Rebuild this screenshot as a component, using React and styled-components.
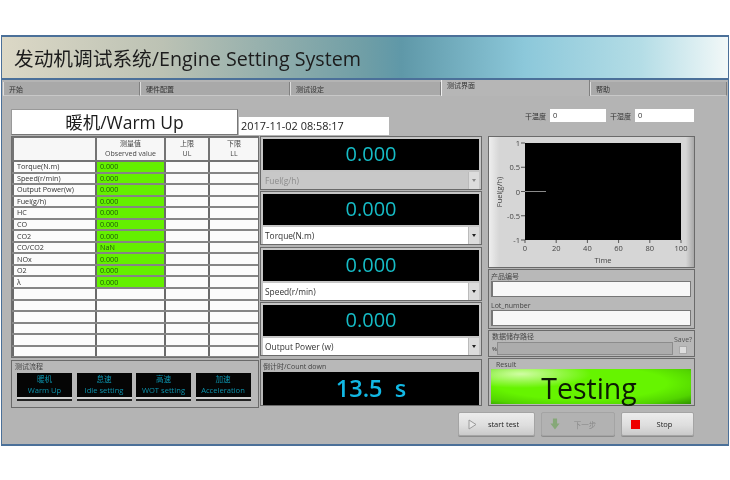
import React from 'react';
import styled, { createGlobalStyle } from 'styled-components';

const FONT = '"Open Sans", "Noto Sans", "Noto Sans CJK SC", sans-serif';
const CYAN = '#16bcc6';

const GlobalStyle = createGlobalStyle`
  html, body {
    margin: 0;
    padding: 0;
    background: #fff;
  }
  body {
    width: 730px;
    height: 480px;
    overflow: hidden;
    font-family: ${FONT};
  }
`;

const SWindow = styled.div`
  box-sizing: border-box;
  width: 728px;
  height: 411px;
  margin: 35px 0 0 1px;
  border: 1px solid #4b7099;
  border-top-width: 2px;
  border-bottom-width: 2px;
  background: #b4b4b4;
  display: flex;
  flex-direction: column;
  filter: blur(0.35px);
`;
const STitleBar = styled.div`
  height: 43px;
  box-sizing: border-box;
  flex: none;
  padding-left: 12px;
  display: flex;
  align-items: center;
  font-size: 19.7px;
  color: #1c1c1c;
  background: linear-gradient(90deg, #dcd8c6 0%, #bcc2b4 22%, #6f9ea6 50%, #5f98a8 55%, #8cc8da 72%, #b4dde6 88%, #f2f8f8 100%);
  border-bottom: 2px solid #4b7099;
`;
const STabs = styled.div`
  height: 16px;
  flex: none;
  display: flex;
  align-items: flex-end;
  padding-left: 1px;
`;
const STab = styled.div`
  box-sizing: border-box;
  width: ${(p) => p.$w}px;
  height: ${(p) => (p.$active ? 16 : 14)}px;
  padding: ${(p) => (p.$active ? '1px' : '3px')} 0 0 5px;
  font-size: 7px;
  line-height: 9px;
  color: #333;
  background: ${(p) => (p.$active ? '#b6b6b6' : '#a9a9a9')};
  border-left: 1px solid ${(p) => (p.$active ? '#eee' : '#ddd')};
  border-right: 1px solid #808080;
  border-bottom: ${(p) => (p.$active ? 'none' : '1px solid #c8c8c8')};
`;
const SPanel = styled.div`
  flex: 1;
  padding: 12px 0 0 9px;
  display: flex;
  flex-direction: column;
`;
const STopRow = styled.div`
  height: 27px;
  display: flex;
  align-items: flex-end;
`;
const SModeBox = styled.div`
  box-sizing: border-box;
  width: 227px;
  height: 26px;
  background: #fff;
  border: 1px solid #777;
  border-top-color: #999;
  border-left-color: #999;
  font-size: 17.5px;
  line-height: 24px;
  text-align: center;
  color: #1c1c1c;
`;
const SDateBox = styled.div`
  box-sizing: border-box;
  width: 150px;
  height: 18px;
  margin-left: 1px;
  background: #fff;
  padding-left: 2px;
  font-size: 10.9px;
  line-height: 18px;
  color: #222;
`;
const STemps = styled.div`
  margin-left: 136px;
  align-self: flex-start;
  padding-top: 1px;
  display: flex;
  align-items: center;
  gap: 4px;
  font-size: 7px;
  color: #333;
`;
const STempInput = styled.div`
  box-sizing: border-box;
  width: ${(p) => p.$w}px;
  height: 13px;
  background: #fff;
  padding-left: 3px;
  font-size: 7.5px;
  line-height: 13px;
`;
const SMain = styled.div`
  margin-top: 1px;
  display: grid;
  grid-template-columns: 248px 227px 207px;
  column-gap: 1px;
  height: 271px;
`;
const SColumn = styled.div`
  display: flex;
  flex-direction: column;
  gap: ${(p) => p.$gap || 0}px;
  padding-right: ${(p) => p.$right || 0}px;
`;

const STableFrame = styled.div`
  box-sizing: border-box;
  height: 222px;
  border: 1px solid #6e6e6e;
  background: #808080;
  overflow: hidden;
`;
const STable = styled.table`
  width: 100%;
  table-layout: fixed;
  border-collapse: collapse;
  font-size: 7.2px;
  color: #333;
`;
const SHeadCell = styled.th`
  height: 22px;
  padding: 0;
  background: #f7f7f7;
  border: 2px solid #747474;
  border-top-width: 1px;
  font-weight: 400;
  font-size: 7px;
  line-height: 10px;
  color: #444;
`;
const SCell = styled.td`
  height: 9.55px;
  line-height: 9px;
  padding: 0 0 0 3px;
  background: ${(p) => (p.$value ? '#64f000' : '#fbfbfb')};
  color: ${(p) => (p.$value ? '#1f5a08' : '#333')};
  border: 2px solid #858585;
  border-left-color: #6a6a6a;
  border-right-color: #6a6a6a;
  overflow: hidden;
  white-space: nowrap;
`;
const SFrameBox = styled.div`
  box-sizing: border-box;
  border: 1px solid #6a6a6a;
  background: #b8b8b8;
`;
const SSmallLabel = styled.div`
  font-size: 7px;
  line-height: 9px;
  color: #444;
`;
const SProcess = styled(SFrameBox)`
  height: 48px;
  margin-top: 2px;
  padding: 1px 3px;
`;
const SProcessRow = styled.div`
  display: flex;
  gap: 4.5px;
  margin-top: 2px;
  padding-left: 2px;
`;
const SProcessButton = styled.div`
  box-sizing: border-box;
  width: 55px;
  height: 26px;
  background: #050505;
  background-clip: padding-box;
  border-bottom: 2px solid #d0d0d0;
  box-shadow: 0 2px 0 #222;
  color: #0c93ad;
  font-size: 7.6px;
  line-height: 11px;
  text-align: center;
  padding-top: 1px;
  white-space: nowrap;
`;
const SDisplayCard = styled(SFrameBox)`
  height: 54px;
  margin-bottom: 1.4px;
  padding: 2px 2px 0 2px;
  background: #c6c6c6;
`;
const SDisplay = styled.div`
  height: 31px;
  background: #000;
  color: ${CYAN};
  font-size: 20px;
  line-height: 30px;
  text-align: center;
`;
const SSelect = styled.div`
  height: 17px;
  margin-top: 2px;
  display: flex;
  align-items: center;
  background: ${(p) => (p.$disabled ? '#c8c8c8' : '#fff')};
  color: ${(p) => (p.$disabled ? '#8c8c8c' : '#333')};
  font-size: 8.4px;
  padding-left: 2px;
`;
const SSelectArrow = styled.div`
  margin-left: auto;
  width: 10px;
  height: 17px;
  border-left: 1px solid #bbb;
  background: #dcdcdc;
  display: flex;
  align-items: center;
  justify-content: center;
  &::after {
    content: '';
    border-left: 2px solid transparent;
    border-right: 2px solid transparent;
    border-top: 3px solid ${(p) => (p.$disabled ? '#888' : '#222')};
  }
`;
const SCountdown = styled(SFrameBox)`
  height: 47px;
  margin-top: 1px;
  padding: 2px 2px 0 2px;
`;
const SCountValue = styled.div`
  height: 33px;
  margin-top: 1px;
  background: #000;
  color: #12b8e4;
  font-size: 23.5px;
  font-weight: 600;
  line-height: 32px;
  text-align: center;
  white-space: pre;
`;
const SChartBox = styled(SFrameBox)`
  height: 132px;
  background: linear-gradient(90deg, #eee 0, #d6d6d6 5%, #d6d6d6 96%, #a8a8a8 100%);
`;
const SLotBox = styled(SFrameBox)`
  height: 60px;
  padding: 2px 3px 0 2px;
`;
const SLotInput = styled.div`
  box-sizing: border-box;
  height: 16px;
  margin-bottom: 4px;
  background: #f8f8f8;
  border: 1px solid #777;
  border-left-width: 2px;
`;
const SPathBox = styled(SFrameBox)`
  height: 27px;
  padding: 1px 1px 0 3px;
  display: flex;
`;
const SPathMain = styled.div`
  flex: 1;
`;
const SPathField = styled.div`
  display: flex;
  align-items: center;
  font-size: 6px;
  color: #333;
  margin-top: 1px;
`;
const SPathInput = styled.div`
  flex: 1;
  height: 11px;
  background: #acacac;
  border: 1px solid #8c8c8c;
`;
const SSaveBox = styled.div`
  width: 20px;
  font-size: 7px;
  line-height: 9px;
  color: #555;
  text-align: center;
  margin-top: 3px;
`;
const SCheckbox = styled.div`
  width: 6px;
  height: 6px;
  margin: 2px auto 0;
  background: #ddd;
  border: 1px solid #aaa;
`;
const SResultBox = styled(SFrameBox)`
  height: 48px;
  padding: 0 3px 0 2px;
`;
const SResultLabel = styled(SSmallLabel)`
  padding: 1px 0 0 5px;
  height: 9px;
`;
const SResultLamp = styled.div`
  height: 35px;
  padding-right: 4px;
  color: #0c1a04;
  font-size: 28.5px;
  line-height: 39px;
  text-align: center;
  background:
    radial-gradient(ellipse 70px 14px at 30px 5px, rgba(235, 255, 205, 0.8), transparent),
    radial-gradient(ellipse at 45% 40%, #66f400 55%, #52d400 80%, #2e9200 100%);
`;
const SActions = styled.div`
  margin-top: 5px;
  padding-left: 447px;
  display: flex;
  gap: 6px;
`;
const SActionButton = styled.div`
  box-sizing: border-box;
  width: ${(p) => p.$w}px;
  height: 24px;
  display: flex;
  align-items: center;
  border: 1px solid #a4a4a4;
  border-radius: 2px;
  background: ${(p) => (p.$dim ? '#b2b2b2' : 'linear-gradient(#ececec, #dedede 55%, #cacaca)')};
  box-shadow: 0 1px 0 #8c8c8c;
  font-size: 7.5px;
  color: ${(p) => (p.$dim ? '#8a8a8a' : '#222')};
`;
const SActionIcon = styled.div`
  width: 26px;
  display: flex;
  justify-content: center;
`;
const SActionText = styled.div`
  flex: 1;
  text-align: center;
  padding-right: 12px;
`;

const TABS = [
  { w: 137, label: '开始' },
  { w: 150, label: '硬件配置' },
  { w: 151, label: '测试设定' },
  { w: 149, label: '测试界面', active: true },
  { w: 137, label: '帮助' },
];
const ROWS = [
  ['Torque(N.m)', '0.000'],
  ['Speed(r/min)', '0.000'],
  ['Output Power(w)', '0.000'],
  ['Fuel(g/h)', '0.000'],
  ['HC', '0.000'],
  ['CO', '0.000'],
  ['CO2', '0.000'],
  ['CO/CO2', 'NaN'],
  ['NOx', '0.000'],
  ['O2', '0.000'],
  ['λ', '0.000'],
  ['', ''],
  ['', ''],
  ['', ''],
  ['', ''],
  ['', ''],
  ['', ''],
];
const STEPS = [
  ['暖机', 'Warm Up'],
  ['怠速', 'Idle setting'],
  ['高速', 'WOT setting'],
  ['加速', 'Acceleration'],
];
const DISPLAYS = [
  { label: 'Fuel(g/h)', disabled: true },
  { label: 'Torque(N.m)' },
  { label: 'Speed(r/min)' },
  { label: 'Output Power (w)' },
];

const Chart = () => {
  const xs = [0, 20, 40, 60, 80, 100];
  const ys = [
    ['1', 0],
    ['0.5', 24.25],
    ['0', 48.5],
    ['-0.5', 72.75],
    ['-1', 97],
  ];
  return (
    <svg width="205" height="130" viewBox="0 0 205 130" fontFamily={FONT} fontSize="7.5" fill="#444">
      <rect x="36" y="6" width="156" height="97" fill="#000" />
      <line x1="36" y1="54.5" x2="57" y2="54.5" stroke="#8a8a8a" strokeWidth="1" />
      {ys.map(([label, y]) => (
        <g key={label}>
          <line x1="32" y1={6 + y} x2="36" y2={6 + y} stroke="#555" />
          <text x="31" y={9 + y} textAnchor="end">{label}</text>
        </g>
      ))}
      {xs.map((v) => (
        <g key={v}>
          <line x1={36 + v * 1.56} y1="103" x2={36 + v * 1.56} y2="106" stroke="#555" />
          <text x={36 + v * 1.56} y="114" textAnchor="middle">{v}</text>
        </g>
      ))}
      <text x="114" y="126" textAnchor="middle">Time</text>
      <text transform="translate(13 55) rotate(-90)" textAnchor="middle">Fuel(g/h)</text>
    </svg>
  );
};

const App = () => (
  <>
    <GlobalStyle />
    <SWindow>
      <STitleBar>发动机调试系统/Engine Setting System</STitleBar>
      <STabs>
        {TABS.map((t) => (
          <STab key={t.label} $w={t.w} $active={t.active}>{t.label}</STab>
        ))}
      </STabs>
      <SPanel>
        <STopRow>
          <SModeBox>暖机/Warm Up</SModeBox>
          <SDateBox>2017-11-02 08:58:17</SDateBox>
          <STemps>
            <span>干温度</span>
            <STempInput $w={56}>0</STempInput>
            <span>干湿度</span>
            <STempInput $w={59}>0</STempInput>
          </STemps>
        </STopRow>
        <SMain>
          <SColumn>
            <STableFrame>
              <STable>
                <colgroup>
                  <col style={{ width: 83 }} />
                  <col style={{ width: 69 }} />
                  <col style={{ width: 44 }} />
                  <col style={{ width: 50 }} />
                </colgroup>
                <thead>
                  <tr>
                    <SHeadCell />
                    <SHeadCell>测量值<br />Observed value</SHeadCell>
                    <SHeadCell>上限<br />UL</SHeadCell>
                    <SHeadCell>下限<br />LL</SHeadCell>
                  </tr>
                </thead>
                <tbody>
                  {ROWS.map(([name, value], i) => (
                    <tr key={i}>
                      <SCell>{name}</SCell>
                      <SCell $value={i < 11}>{value}</SCell>
                      <SCell />
                      <SCell />
                    </tr>
                  ))}
                </tbody>
              </STable>
            </STableFrame>
            <SProcess>
              <SSmallLabel>测试流程</SSmallLabel>
              <SProcessRow>
                {STEPS.map(([cn, en]) => (
                  <SProcessButton key={en}>{cn}<br />{en}</SProcessButton>
                ))}
              </SProcessRow>
            </SProcess>
          </SColumn>
          <SColumn $right={5}>
            {DISPLAYS.map((d) => (
              <SDisplayCard key={d.label}>
                <SDisplay>0.000</SDisplay>
                <SSelect $disabled={d.disabled}>
                  {d.label}
                  <SSelectArrow $disabled={d.disabled} />
                </SSelect>
              </SDisplayCard>
            ))}
            <SCountdown>
              <SSmallLabel>倒计时/Count down</SSmallLabel>
              <SCountValue>13.5  s</SCountValue>
            </SCountdown>
          </SColumn>
          <SColumn $gap={1}>
            <SChartBox>
              <Chart />
            </SChartBox>
            <SLotBox>
              <SSmallLabel>产品编号</SSmallLabel>
              <SLotInput />
              <SSmallLabel>Lot_number</SSmallLabel>
              <SLotInput />
            </SLotBox>
            <SPathBox>
              <SPathMain>
                <SSmallLabel>数据储存路径</SSmallLabel>
                <SPathField>
                  <span>%</span>
                  <SPathInput />
                </SPathField>
              </SPathMain>
              <SSaveBox>
                Save?
                <SCheckbox />
              </SSaveBox>
            </SPathBox>
            <SResultBox>
              <SResultLabel>Result</SResultLabel>
              <SResultLamp>Testing</SResultLamp>
            </SResultBox>
          </SColumn>
        </SMain>
        <SActions>
          <SActionButton $w={77}>
            <SActionIcon>
              <svg width="9" height="11" viewBox="0 0 9 11">
                <path d="M1 1 L8 5.5 L1 10 Z" fill="#e8e8e8" stroke="#9a9a9a" />
              </svg>
            </SActionIcon>
            <SActionText>start test</SActionText>
          </SActionButton>
          <SActionButton $w={74} $dim>
            <SActionIcon>
              <svg width="10" height="12" viewBox="0 0 12 13">
                <path d="M3.5 0 H8.5 V6 H11.5 L6 13 L0.5 6 H3.5 Z" fill="#86a878" />
              </svg>
            </SActionIcon>
            <SActionText>下一步</SActionText>
          </SActionButton>
          <SActionButton $w={73}>
            <SActionIcon>
              <svg width="9" height="9" viewBox="0 0 9 9">
                <rect width="9" height="9" fill="#ee0000" />
              </svg>
            </SActionIcon>
            <SActionText>Stop</SActionText>
          </SActionButton>
        </SActions>
      </SPanel>
    </SWindow>
  </>
);

export default App;
